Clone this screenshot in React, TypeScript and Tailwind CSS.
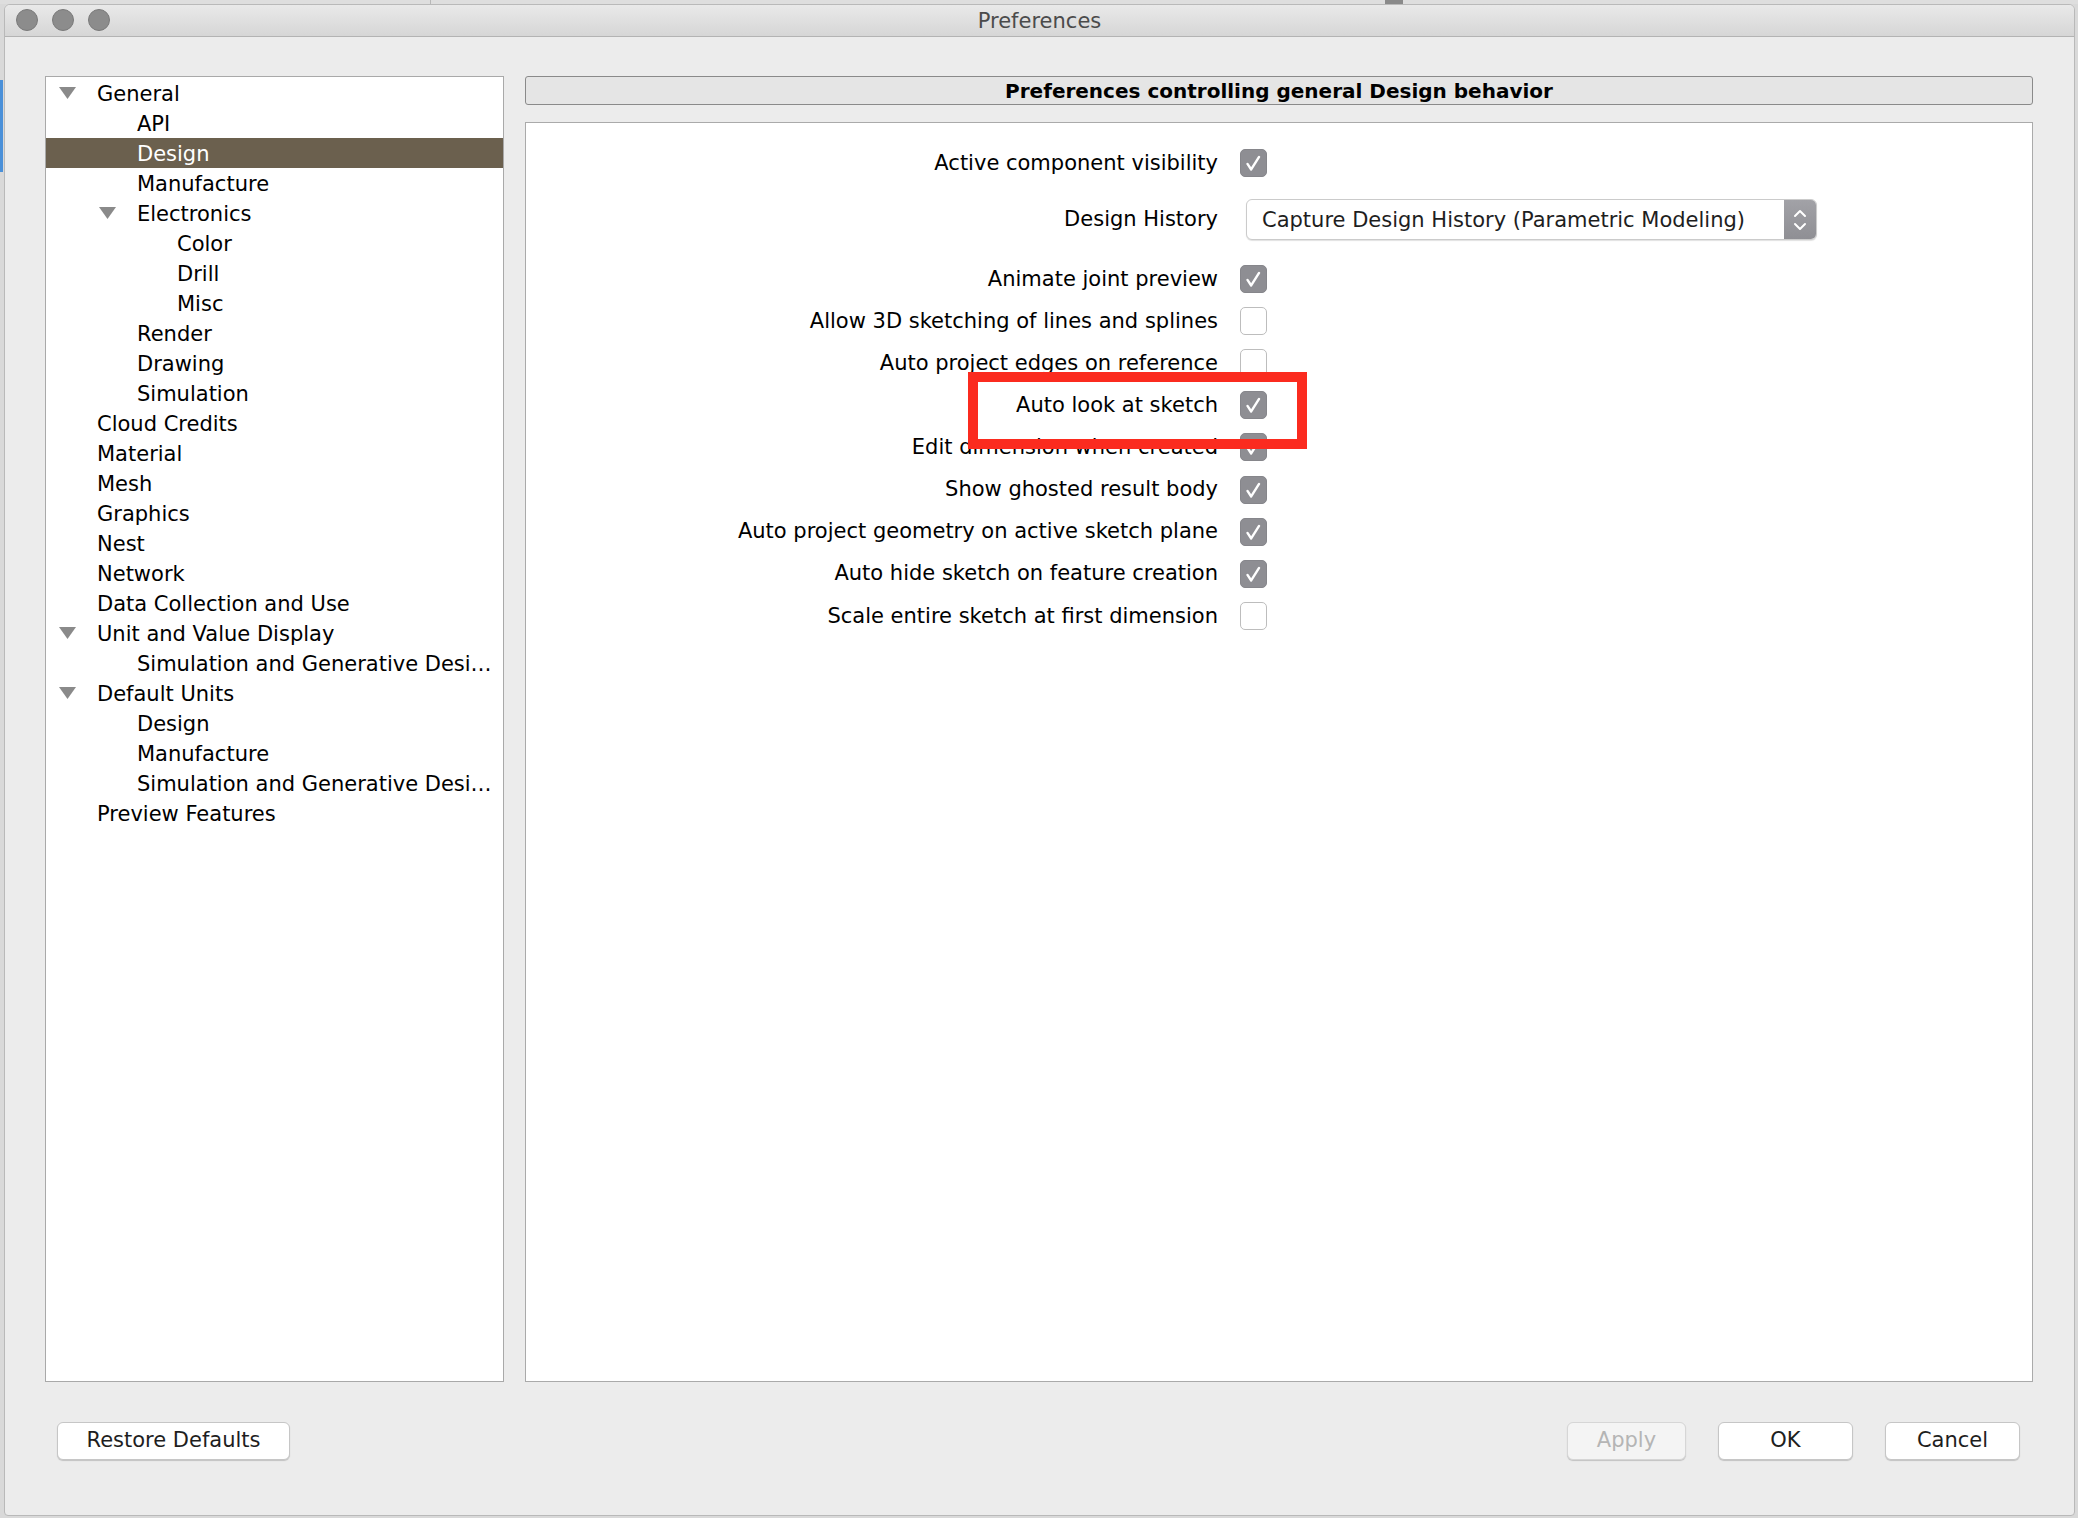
import React from "react";

type Node = { label: string; level: number; expanded?: boolean; selected?: boolean };

const tree: Node[] = [
  { label: "General", level: 0, expanded: true },
  { label: "API", level: 1 },
  { label: "Design", level: 1, selected: true },
  { label: "Manufacture", level: 1 },
  { label: "Electronics", level: 1, expanded: true },
  { label: "Color", level: 2 },
  { label: "Drill", level: 2 },
  { label: "Misc", level: 2 },
  { label: "Render", level: 1 },
  { label: "Drawing", level: 1 },
  { label: "Simulation", level: 1 },
  { label: "Cloud Credits", level: 0 },
  { label: "Material", level: 0 },
  { label: "Mesh", level: 0 },
  { label: "Graphics", level: 0 },
  { label: "Nest", level: 0 },
  { label: "Network", level: 0 },
  { label: "Data Collection and Use", level: 0 },
  { label: "Unit and Value Display", level: 0, expanded: true },
  { label: "Simulation and Generative Desi…", level: 1 },
  { label: "Default Units", level: 0, expanded: true },
  { label: "Design", level: 1 },
  { label: "Manufacture", level: 1 },
  { label: "Simulation and Generative Desi…", level: 1 },
  { label: "Preview Features", level: 0 },
];

const prefs: { label: string; checked: boolean }[] = [
  { label: "Animate joint preview", checked: true },
  { label: "Allow 3D sketching of lines and splines", checked: false },
  { label: "Auto project edges on reference", checked: false },
  { label: "Auto look at sketch", checked: true },
  { label: "Edit dimension when created", checked: true },
  { label: "Show ghosted result body", checked: true },
  { label: "Auto project geometry on active sketch plane", checked: true },
  { label: "Auto hide sketch on feature creation", checked: true },
  { label: "Scale entire sketch at first dimension", checked: false },
];

function Triangle() {
  return (
    <svg width="17" height="12" viewBox="0 0 17 12" className="block">
      <polygon points="0,0 17,0 8.5,12" fill="#8a8a8a" />
    </svg>
  );
}

function Checkbox({ checked }: { checked: boolean }) {
  if (checked) {
    return (
      <div className="w-[27px] h-[28px] rounded-[5px] bg-[#8e8e93] border border-[#86868b] flex items-center justify-center">
        <svg width="27" height="28" viewBox="0 0 27 28" className="block">
          <path d="M7 15 L11 21 L19.5 7.5" fill="none" stroke="#ffffff" strokeWidth="2.6" strokeLinecap="round" strokeLinejoin="round" />
        </svg>
      </div>
    );
  }
  return <div className="w-[27px] h-[28px] rounded-[5px] bg-white border border-[#bdbdbd]" />;
}

function Row({ label, children, h }: { label: string; children: React.ReactNode; h: string }) {
  return (
    <div className={`flex items-center ${h}`}>
      <div className="w-[714px] text-right pr-[22px] pt-[1px] text-[21px] text-black whitespace-nowrap">{label}</div>
      {children}
    </div>
  );
}

function Button({ label, disabled, w }: { label: string; disabled?: boolean; w: string }) {
  return (
    <div
      className={`${w} h-[38px] rounded-[6px] border flex items-center justify-center text-[21px] shadow-[0_1px_1px_rgba(0,0,0,0.18)] ${
        disabled ? "bg-[#f4f4f4] border-[#d6d6d6] text-[#b5b5b5]" : "bg-white border-[#c6c6c6] text-[#1e1e1e]"
      }`}
    >
      {label}
    </div>
  );
}

export default function App() {
  return (
    <div
      className="w-[2078px] h-[1518px] bg-[#d9d9d9] overflow-hidden relative"
      style={{ fontFamily: '"DejaVu Sans", "Lucida Grande", Verdana, sans-serif' }}
    >
      {/* desktop strip behind */}
      <div className="h-[4px] bg-[#dedede] relative overflow-hidden">
        <div className="absolute left-[430px] top-0 w-px h-[4px] bg-[#b8b8b8]" />
        <div className="absolute left-[1385px] top-0 w-[18px] h-[4px] bg-[#8a8a8a]" />
      </div>
      <div className="absolute left-0 top-[80px] w-[3px] h-[92px] bg-[#4a90d9]" />

      {/* window */}
      <div className="ml-[4px] w-[2071px] h-[1512px] bg-[#ececec] rounded-t-[6px] rounded-b-[4px] border border-[#b9b9b9] flex flex-col overflow-hidden">
        {/* title bar */}
        <div className="h-[32px] shrink-0 bg-gradient-to-b from-[#e9e9e9] to-[#d6d6d6] border-b border-[#b3b3b3] relative flex items-center justify-center">
          <div className="absolute left-[11px] top-[4px] flex gap-[14px]">
            <div className="w-[22px] h-[22px] rounded-full bg-[#8c8c8c] border border-[#7a7a7a]" />
            <div className="w-[22px] h-[22px] rounded-full bg-[#8c8c8c] border border-[#7a7a7a]" />
            <div className="w-[22px] h-[22px] rounded-full bg-[#8c8c8c] border border-[#7a7a7a]" />
          </div>
          <div className="text-[21px] text-[#4b4b4b] pt-[2px]">Preferences</div>
        </div>

        {/* body */}
        <div className="flex-1 pl-[40px] pr-[41px] pt-[39px] flex flex-col">
          <div className="flex gap-[21px] h-[1306px]">
            {/* tree */}
            <div className="w-[459px] h-full bg-white border border-[#a9a9a9] pt-[1px]">
              {tree.map((n, i) => (
                <div
                  key={i}
                  className={`h-[30px] flex items-center relative text-[21px] whitespace-nowrap ${
                    n.selected ? "bg-[#6b604e] text-white" : "text-black"
                  }`}
                >
                  {n.expanded && (
                    <div className="absolute top-[9px]" style={{ left: 13 + n.level * 40 }}>
                      <Triangle />
                    </div>
                  )}
                  <span className="pt-[3px]" style={{ paddingLeft: 51 + n.level * 40 }}>
                    {n.label}
                  </span>
                </div>
              ))}
            </div>

            {/* right */}
            <div className="flex-1 flex flex-col">
              <div className="h-[29px] shrink-0 bg-[#e5e5e5] border border-[#8a8a8a] rounded-[3px] flex items-center justify-center text-[20px] font-bold text-black">
                Preferences controlling general Design behavior
              </div>
              <div className="mt-[17px] flex-1 bg-white border border-[#aaaaaa] pt-[19px] relative">
                <Row label="Active component visibility" h="h-[42px]">
                  <Checkbox checked />
                </Row>
                <Row label="Design History" h="h-[74px] pb-[3px]">
                  <div className="ml-[6px] w-[571px] h-[41px] rounded-[6px] border border-[#cbcbcb] bg-white shadow-[0_1px_1px_rgba(0,0,0,0.12)] flex items-center overflow-hidden">
                    <div className="flex-1 pl-[15px] pt-[2px] text-[21px] text-[#1e1e1e] whitespace-nowrap">
                      Capture Design History (Parametric Modeling)
                    </div>
                    <div className="w-[32px] h-full bg-gradient-to-b from-[#a2a2a7] to-[#8f8f94] flex items-center justify-center">
                      <svg width="16" height="26" viewBox="0 0 16 26" className="block">
                        <path d="M3 9 L8 4 L13 9" fill="none" stroke="#fff" strokeWidth="2" strokeLinecap="round" strokeLinejoin="round" />
                        <path d="M3 17 L8 22 L13 17" fill="none" stroke="#fff" strokeWidth="2" strokeLinecap="round" strokeLinejoin="round" />
                      </svg>
                    </div>
                  </div>
                </Row>
                {prefs.map((p, i) => (
                  <Row key={i} label={p.label} h="h-[42.1px]">
                    <Checkbox checked={p.checked} />
                  </Row>
                ))}

                {/* annotation box */}
                <div className="absolute left-[442px] top-[249px] w-[339px] h-[77px] border-[10px] border-[#fb2b1f] pointer-events-none" />
              </div>
            </div>
          </div>

          {/* buttons */}
          <div className="mt-[40px] flex items-center pl-[12px] pr-[13px]">
            <Button label="Restore Defaults" w="w-[233px]" />
            <div className="flex-1" />
            <div className="flex gap-[32px]">
              <Button label="Apply" disabled w="w-[119px]" />
              <Button label="OK" w="w-[135px]" />
              <Button label="Cancel" w="w-[135px]" />
            </div>
          </div>
        </div>
      </div>
    </div>
  );
}
